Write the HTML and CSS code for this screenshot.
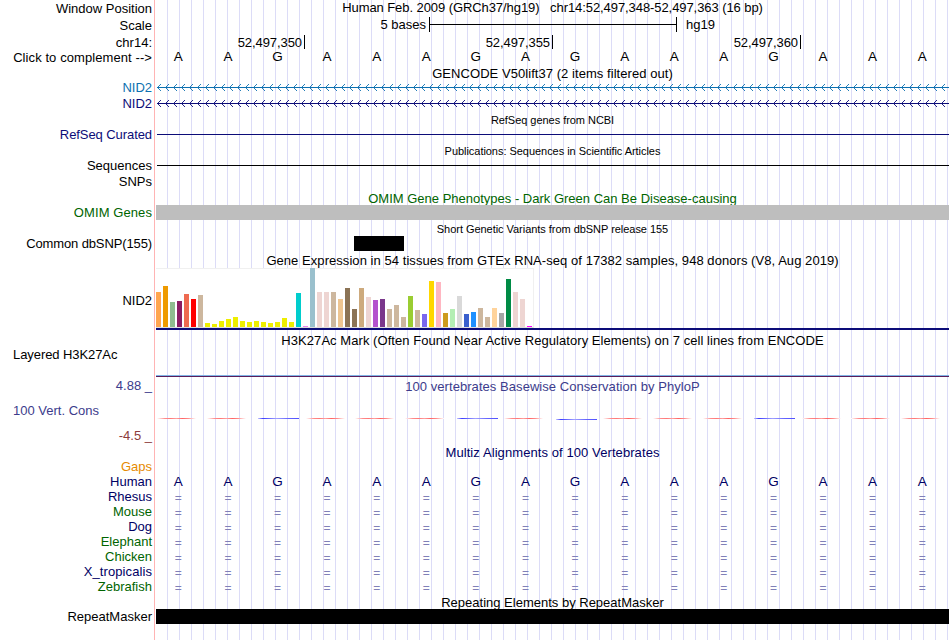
FILE: index.html
```html
<!DOCTYPE html>
<html lang="en">
<head>
    <meta charset="UTF-8">
    <title>UCSC Genome Browser - chr14:52,497,348-52,497,363</title>
    <link rel="stylesheet" href="styles.css">
</head>
<body>
    <div class="browser">
        <div class="row h17">
            <div class="label">Window Position</div>
            <div class="track title tight"><span>Human Feb. 2009 (GRCh37/hg19) &nbsp; chr14:52,497,348-52,497,363 (16 bp)</span></div>
        </div>
        <div class="row h17">
            <div class="label">Scale</div>
            <div class="track scale">
                <span class="scale-left">5 bases</span>
                <span class="scale-bar"></span>
                <span class="scale-right">hg19</span>
            </div>
        </div>
        <div class="row h16">
            <div class="label down1">chr14:</div>
            <div class="track ruler">
                <span class="tick">52,497,350</span>
                <span class="tick">52,497,355</span>
                <span class="tick">52,497,360</span>
            </div>
        </div>
        <div class="row h15">
            <div class="label wide">Click to complement --&gt;</div>
            <div class="track bases up1"></div>
        </div>

        <div class="row h15"><div class="label"></div><div class="track title loose down1">GENCODE V50lift37 (2 items filtered out)</div></div>
        <div class="row h16"><div class="label blue">NID2</div><div class="track"><svg class="gene blue" width="793" height="16"></svg></div></div>
        <div class="row h16"><div class="label navy">NID2</div><div class="track"><svg class="gene navy" width="793" height="16"></svg></div></div>

        <div class="row h15"><div class="label"></div><div class="track title small down1">RefSeq genes from NCBI</div></div>
        <div class="row h16"><div class="label navy tight">RefSeq Curated</div><div class="track"><div class="line navy"></div></div></div>

        <div class="row h15"><div class="label"></div><div class="track title small down1">Publications: Sequences in Scientific Articles</div></div>
        <div class="row h16"><div class="label">Sequences</div><div class="track"><div class="line"></div></div></div>
        <div class="row h16"><div class="label">SNPs</div><div class="track"></div></div>

        <div class="row h15"><div class="label"></div><div class="track title green down1">OMIM Gene Phenotypes - Dark Green Can Be Disease-causing</div></div>
        <div class="row h15"><div class="label green wide">OMIM Genes</div><div class="track bar-gray"></div></div>

        <div class="row h16"><div class="label"></div><div class="track title small down2">Short Genetic Variants from dbSNP release 155</div></div>
        <div class="row h16"><div class="label narrow">Common dbSNP(155)</div><div class="track"><div class="snp"></div></div></div>

        <div class="row h16"><div class="label"></div><div class="track title loose down1">Gene Expression in 54 tissues from GTEx RNA-seq of 17382 samples, 948 donors (V8, Aug 2019)</div></div>
        <div class="row gtex-row">
            <div class="label">NID2</div>
            <div class="track gtex"><div class="gtex-bars"></div></div>
        </div>

        <div class="row h17"><div class="label"></div><div class="track title loose down3">H3K27Ac Mark (Often Found Near Active Regulatory Elements) on 7 cell lines from ENCODE</div></div>
        <div class="row h3k-row"><div class="label left tight">Layered H3K27Ac</div><div class="track h3k"></div></div>

        <div class="row h15"><div class="label indigo">4.88 _</div><div class="track title loose indigo down1">100 vertebrates Basewise Conservation by PhyloP</div></div>
        <div class="row cons-row"><div class="label left indigo">100 Vert. Cons</div><div class="track cons"></div></div>
        <div class="row h16"><div class="label maroon">-4.5 _</div><div class="track"></div></div>

        <div class="row h15"><div class="label"></div><div class="track title wide darknavy down1">Multiz Alignments of 100 Vertebrates</div></div>
        <div class="row h15"><div class="label orange">Gaps</div><div class="track"></div></div>
        <div class="row h15"><div class="label darknavy">Human</div><div class="track bases darknavy"></div></div>
        <div class="row h15"><div class="label darknavy">Rhesus</div><div class="track match"></div></div>
        <div class="row h15"><div class="label green">Mouse</div><div class="track match"></div></div>
        <div class="row h15"><div class="label darknavy">Dog</div><div class="track match"></div></div>
        <div class="row h15"><div class="label green">Elephant</div><div class="track match"></div></div>
        <div class="row h15"><div class="label green">Chicken</div><div class="track match"></div></div>
        <div class="row h15"><div class="label darknavy wide">X_tropicalis</div><div class="track match"></div></div>
        <div class="row h15"><div class="label green">Zebrafish</div><div class="track match"></div></div>

        <div class="row h15"><div class="label"></div><div class="track title down1">Repeating Elements by RepeatMasker</div></div>
        <div class="row h15"><div class="label">RepeatMasker</div><div class="track bar-black"></div></div>
    </div>

    <script>
        const sequence = 'AAGAAAGAGAAAGAAA';

        document.querySelectorAll('.bases').forEach(el => {
            el.innerHTML = [...sequence].map(b => `<span>${b}</span>`).join('');
        });
        document.querySelectorAll('.match').forEach(el => {
            el.innerHTML = [...sequence].map(() => '<span>=</span>').join('');
        });

        // conservation wiggle: blue for G, red for A, the ninth base sits 1px lower
        document.querySelector('.cons').innerHTML = [...sequence].map((b, i) =>
            `<i class="${b === 'G' ? 'pos' : 'neg'}${i === 8 ? ' low' : ''}"></i>`).join('');

        // strand arrows every 8px
        document.querySelectorAll('.gene').forEach(svg => {
            let d = '';
            for (let x = 1; x < 790; x += 8) {
                d += `M${x + 4} 4L${x + .5} 7.5L${x + 4} 11`;
            }
            svg.innerHTML = `<path d="M1 7.5H793"/><path class="arrows" d="${d}"/>`;
        });

        // GTEx tissues: [height, color]
        const tissues = [
            [35, '#ffa54f'], [41, '#ee9a00'], [25, '#8fbc8f'], [26, '#8b1c62'], [33, '#ee6a50'], [28, '#ff0000'], [32, '#cdb79e'],
            [4, '#eeee00'], [3, '#eeee00'], [6, '#eeee00'], [8, '#eeee00'], [10, '#eeee00'], [6, '#eeee00'], [5, '#eeee00'],
            [6, '#eeee00'], [5, '#eeee00'], [4, '#eeee00'], [5, '#eeee00'], [9, '#eeee00'], [5, '#eeee00'],
            [34, '#00cdcd'], [1, '#ee82ee'], [59, '#9ac0cd'], [35, '#eed5d2'], [35, '#eed5d2'], [35, '#cdb79e'], [28, '#eec591'],
            [39, '#8b7355'], [18, '#8b7355'], [39, '#cdaa7d'], [30, '#eed5d2'], [27, '#b452cd'], [28, '#7a378b'], [18, '#cdb79e'],
            [22, '#cdb79e'], [10, '#cdb79e'], [31, '#9acd32'], [17, '#cdb79e'], [13, '#7a67ee'], [46, '#ffd700'], [45, '#ffb6c1'],
            [14, '#cd9b1d'], [18, '#b4eeb4'], [31, '#d9d9d9'], [13, '#3a5fcd'], [15, '#1e90ff'], [19, '#cdb79e'], [10, '#cdb79e'],
            [19, '#ffd39b'], [14, '#a6a6a6'], [48, '#008b45'], [35, '#eed5d2'], [28, '#eed5d2'], [1, '#ff00ff']
        ];
        document.querySelector('.gtex-bars').innerHTML = tissues.map(t =>
            `<i style="height:${t[0]}px;background:${t[1]}"></i>`).join('');
    </script>
</body>
</html>
```
FILE: styles.css
```css
body {
    margin: 0;
    background-color: #fff;
    font-family: "Liberation Sans", Arial, sans-serif;
    font-size: 13px;
    line-height: 15px;
    color: #000;
}
.browser {
    width: 949px;
    height: 640px;
    overflow: hidden;
    /* red divider and the blue guide lines */
    background:
        linear-gradient(#ffb4b4, #ffb4b4) 154px 0 / 1px 100% no-repeat,
        repeating-linear-gradient(90deg, #dcdcf7 0 1px, transparent 1px 12px) 167px 0 / 792px 100% no-repeat;
}
.row {
    display: flex;
    height: 15px;
    white-space: nowrap;
}
.h16 { height: 16px; }
.h17 { height: 17px; }
.label {
    width: 152px;
    margin-right: 4px;
    text-align: right;
    flex: none;
}
.h17 .label { padding-top: 1px; }
.label.left {
    text-align: left;
    box-sizing: border-box;
    padding-left: 13px;
}
.track {
    width: 793px;
    flex: none;
}
.title { text-align: center; }
.small {
    font-size: 11px;
    letter-spacing: -0.04px;
}
.narrow { letter-spacing: -0.12px; }
.tight { letter-spacing: -0.075px; }
.loose { letter-spacing: 0.055px; }
.wide { letter-spacing: 0.085px; }
.up1 { margin-top: -1px; }
.down1 { padding-top: 1px; }
.down2 { padding-top: 2px; }
.down3 { padding-top: 3px; }

.blue { color: #0c70b0; }
.navy { color: #0c0c78; }
.darknavy { color: #000064; }
.green { color: #006400; }
.indigo { color: #3c3c8c; }
.maroon { color: #8c3c3c; }
.orange { color: #e68a00; }

.scale {
    display: flex;
}
.scale-left {
    width: 270px;
    text-align: right;
    margin-right: 3px;
}
.scale-bar {
    width: 246px;
    height: 15px;
    border-left: 1px solid #000;
    border-right: 1px solid #000;
    background: linear-gradient(#000, #000) 0 7px / 100% 1px no-repeat;
}
.scale-right { margin-left: 9px; }

.ruler {
    display: flex;
    padding-top: 1px;
    box-sizing: border-box;
}
.tick {
    width: 245px;
    height: 14px;
    padding-right: 2px;
    border-right: 1px solid #000;
    text-align: right;
    letter-spacing: -0.075px;
}
.tick:first-child { width: 146px; }

.bases, .match {
    display: grid;
    grid-template-columns: repeat(16, 49.6px);
    margin-left: -2.5px;
    text-align: center;
}
.bases { font-size: 13.5px; }
.match {
    font-size: 12px;
    color: #8080b8;
    padding-top: 2px;
}

.gene { display: block; }
.gene path {
    fill: none;
    stroke: currentColor;
}
.gene .arrows { stroke-width: 0.9; }
.line {
    height: 1px;
    margin: 7px 0 0 1px;
    background-color: #000;
}
.line.navy { background-color: #0c0c78; }
.bar-gray { background-color: #bebebe; }
.bar-black { background-color: #000; }
.snp {
    width: 50px;
    height: 15px;
    margin-left: 198px;
    background-color: #000;
}

.gtex-row { height: 62px; }
.gtex-row .label { padding-top: 25px; }
.gtex {
    height: 60px;
    border-bottom: 2px solid #0c0c78;
}
.gtex-bars {
    display: flex;
    align-items: flex-end;
    gap: 2px;
    width: 377px;
    height: 59px;
    background: linear-gradient(#f0f0f0, #f0f0f0) 0 0 / 100% 1px no-repeat #fff;
    border-right: 1px solid #f0f0f0;
    border-bottom: 1px solid #dcdcdc;
}
.gtex-bars i { width: 5px; }

.h3k-row { height: 31px; }
.h3k {
    height: 1px;
    margin-top: 28px;
    border-top: 1px solid #82b4e6;
    background-color: #5a1e5a;
}
.cons-row { height: 35px; }
.cons-row .label { padding-top: 10px; }
.cons {
    display: grid;
    grid-template-columns: repeat(16, 49.6px);
    padding-top: 25px;
}
.cons i {
    height: 1px;
    width: 39px;
    margin-left: 1px;
    background: linear-gradient(90deg, #fff, #ff8c8c 20%, #ff7878 35%, #ffa0a0 50%, #ff6464 65%, #ff8c8c 80%, #fff);
}
.cons i.pos {
    width: 41px;
    margin-left: 3px;
    background: linear-gradient(90deg, #c8c8ff, #3c3cff 12%, #a0a0ff 45%, #6464ff 75%, #5050ff);
}
.cons i.low { margin-top: 1px; }
```
